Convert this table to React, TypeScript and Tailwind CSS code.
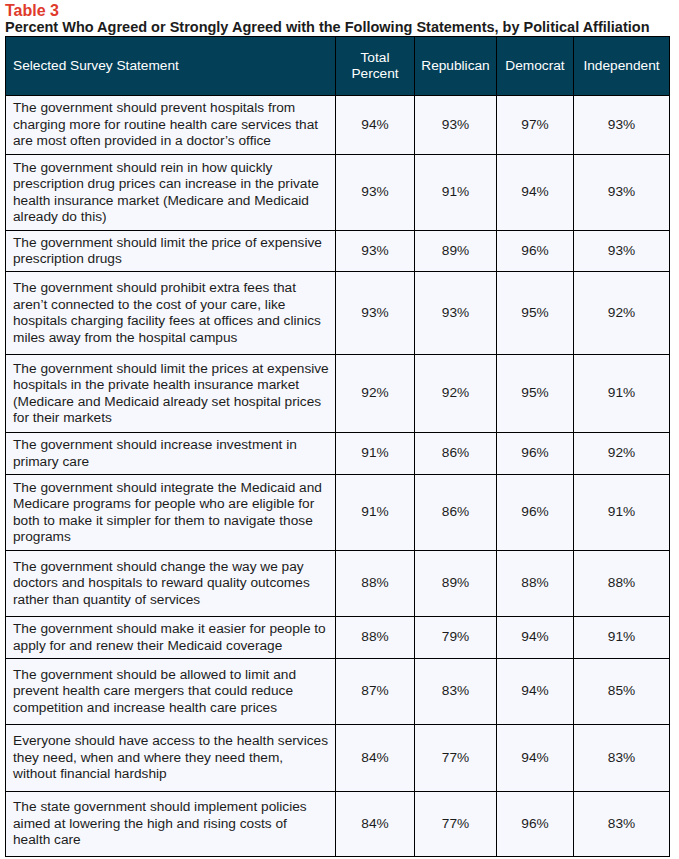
const rows: { lines: string[]; h: string; total: string; rep: string; dem: string; ind: string }[] = [
  {
    lines: [
      "The government should prevent hospitals from",
      "charging more for routine health care services that",
      "are most often provided in a doctor\u2019s office",
    ],
    h: "h-[59px]",
    total: "94%",
    rep: "93%",
    dem: "97%",
    ind: "93%",
  },
  {
    lines: [
      "The government should rein in how quickly",
      "prescription drug prices can increase in the private",
      "health insurance market (Medicare and Medicaid",
      "already do this)",
    ],
    h: "h-[76px]",
    total: "93%",
    rep: "91%",
    dem: "94%",
    ind: "93%",
  },
  {
    lines: ["The government should limit the price of expensive", "prescription drugs"],
    h: "h-[41px]",
    total: "93%",
    rep: "89%",
    dem: "96%",
    ind: "93%",
  },
  {
    lines: [
      "The government should prohibit extra fees that",
      "aren\u2019t connected to the cost of your care, like",
      "hospitals charging facility fees at offices and clinics",
      "miles away from the hospital campus",
    ],
    h: "h-[83px]",
    total: "93%",
    rep: "93%",
    dem: "95%",
    ind: "92%",
  },
  {
    lines: [
      "The government should limit the prices at expensive",
      "hospitals in the private health insurance market",
      "(Medicare and Medicaid already set hospital prices",
      "for their markets",
    ],
    h: "h-[78px]",
    total: "92%",
    rep: "92%",
    dem: "95%",
    ind: "91%",
  },
  {
    lines: ["The government should increase investment in", "primary care"],
    h: "h-[42px]",
    total: "91%",
    rep: "86%",
    dem: "96%",
    ind: "92%",
  },
  {
    lines: [
      "The government should integrate the Medicaid and",
      "Medicare programs for people who are eligible for",
      "both to make it simpler for them to navigate those",
      "programs",
    ],
    h: "h-[76px]",
    total: "91%",
    rep: "86%",
    dem: "96%",
    ind: "91%",
  },
  {
    lines: [
      "The government should change the way we pay",
      "doctors and hospitals to reward quality outcomes",
      "rather than quantity of services",
    ],
    h: "h-[66px]",
    total: "88%",
    rep: "89%",
    dem: "88%",
    ind: "88%",
  },
  {
    lines: [
      "The government should make it easier for people to",
      "apply for and renew their Medicaid coverage",
    ],
    h: "h-[42px]",
    total: "88%",
    rep: "79%",
    dem: "94%",
    ind: "91%",
  },
  {
    lines: [
      "The government should be allowed to limit and",
      "prevent health care mergers that could reduce",
      "competition and increase health care prices",
    ],
    h: "h-[66px]",
    total: "87%",
    rep: "83%",
    dem: "94%",
    ind: "85%",
  },
  {
    lines: [
      "Everyone should have access to the health services",
      "they need, when and where they need them,",
      "without financial hardship",
    ],
    h: "h-[67px]",
    total: "84%",
    rep: "77%",
    dem: "94%",
    ind: "83%",
  },
  {
    lines: [
      "The state government should implement policies",
      "aimed at lowering the high and rising costs of",
      "health care",
    ],
    h: "h-[65px]",
    total: "84%",
    rep: "77%",
    dem: "96%",
    ind: "83%",
  },
];

export default function App() {
  return (
    <div
      className="min-h-screen bg-white px-[5px] pt-[2px] text-[#1c1c1c]"
      style={{ fontFamily: '"Liberation Sans", Arial, sans-serif' }}
    >
      {/* Heading */}
      <div className="text-[16px] font-bold leading-[17px] text-[#e03a2c]">Table 3</div>
      <div className="text-[14.5px] font-bold leading-[17px] text-[#1c1c1c]">
        Percent Who Agreed or Strongly Agreed with the Following Statements, by Political Affiliation
      </div>

      {/* Table */}
      <table className="w-[664px] table-fixed border-collapse border border-black text-[13.7px] leading-[16.5px]">
        <colgroup>
          <col className="w-[330px]" />
          <col className="w-[79px]" />
          <col className="w-[82px]" />
          <col className="w-[77px]" />
          <col className="w-[96px]" />
        </colgroup>
        <thead>
          <tr className="h-[59px] bg-[#043f58] text-white">
            <th className="border border-black px-[7px] text-left font-normal">Selected Survey Statement</th>
            <th className="border border-black px-1 text-center font-normal">
              Total
              <br />
              Percent
            </th>
            <th className="border border-black px-1 text-center font-normal">Republican</th>
            <th className="border border-black px-1 text-center font-normal">Democrat</th>
            <th className="border border-black px-1 text-center font-normal">Independent</th>
          </tr>
        </thead>
        <tbody className="bg-[#f7f8fd]">
          {rows.map((r, i) => (
            <tr key={i} className={r.h}>
              <td className="border border-black px-[7px] py-0">
                {r.lines.map((l, j) => (
                  <div key={j} className="whitespace-nowrap">
                    {l}
                  </div>
                ))}
              </td>
              <td className="border border-black text-center">{r.total}</td>
              <td className="border border-black text-center">{r.rep}</td>
              <td className="border border-black text-center">{r.dem}</td>
              <td className="border border-black text-center">{r.ind}</td>
            </tr>
          ))}
        </tbody>
      </table>
    </div>
  );
}
